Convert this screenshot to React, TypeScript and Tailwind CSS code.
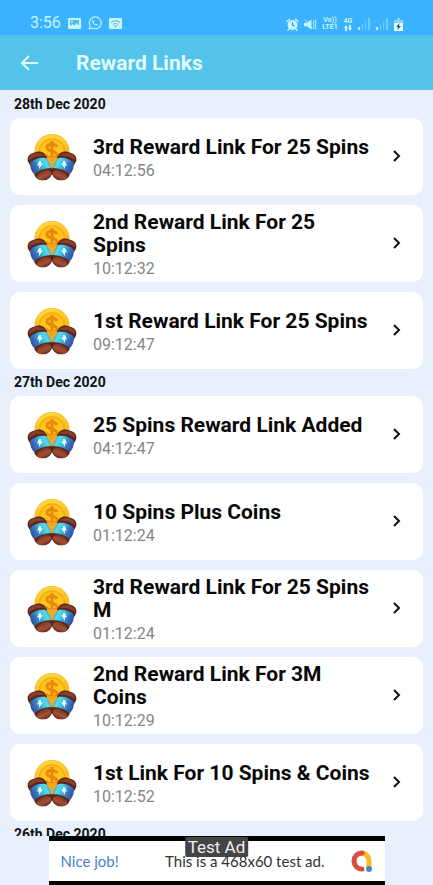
import { JSX, useId } from "react";

interface RewardLink {
  title: string;
  time: string;
}

interface RewardGroup {
  date: string;
  links: RewardLink[];
}

const groups: RewardGroup[] = [
  {
    date: "28th Dec 2020",
    links: [
      { title: "3rd Reward Link For 25 Spins", time: "04:12:56" },
      { title: "2nd Reward Link For 25 Spins", time: "10:12:32" },
      { title: "1st Reward Link For 25 Spins", time: "09:12:47" },
    ],
  },
  {
    date: "27th Dec 2020",
    links: [
      { title: "25 Spins Reward Link Added", time: "04:12:47" },
      { title: "10 Spins Plus Coins", time: "01:12:24" },
      { title: "3rd Reward Link For 25 Spins M", time: "01:12:24" },
      { title: "2nd Reward Link For 3M Coins", time: "10:12:29" },
      { title: "1st Link For 10 Spins & Coins", time: "10:12:52" },
    ],
  },
  { date: "26th Dec 2020", links: [] },
];

const SignalIcon = () => (
  <svg width="13" height="12" viewBox="0 0 13 12" fill="#c5f5ff">
    <rect x="0" y="9" width="2" height="3" />
    <g opacity="0.4">
      <rect x="4" y="6" width="1" height="6" />
      <rect x="7" y="3" width="1" height="9" />
      <rect x="10" y="0" width="2" height="12" />
    </g>
  </svg>
);

const StatusBar = () => (
  <div className="flex h-[35px] shrink-0 items-end justify-between bg-[#3ab2ff] pr-[30px] pb-1 pl-[30px] text-[#c5f5ff]">
    <div className="flex items-center gap-[7px]">
      <span className="text-[16px] leading-[16px]">3:56</span>
      <svg width="13" height="13" viewBox="0 0 13 13" fill="none">
        <rect x="0" y="1" width="13" height="11" rx="1" fill="#c5f5ff" />
        <rect x="2" y="3" width="9" height="7" fill="#4db9f5" />
        <path d="M2 10v-1l2.500-2 2 1.500L9 6l2 2.500V10Z" fill="#c5f5ff" />
        <circle cx="4" cy="4.700" r="1" fill="#c5f5ff" />
      </svg>
      <svg width="14" height="14" viewBox="0 0 24 24" fill="none">
        <path
          d="M2 22l1.700-5.400A10.200 10.200 0 1 1 7.600 20.500Z"
          stroke="#c5f5ff"
          strokeWidth="2"
          strokeLinejoin="round"
        />
        <path
          d="M8.700 6.800c-.9.300-1.700 1.300-1.500 2.700.4 3.300 3.800 6.800 7.200 7.300 1.500.2 2.700-.8 2.900-1.900l-2.600-1.500-1.300 1.200c-1.500-.5-3-2-3.500-3.500l1.200-1.200Z"
          fill="#c5f5ff"
        />
      </svg>
      <svg width="13" height="13" viewBox="0 0 13 13" fill="none">
        <rect y="1" width="13" height="11" rx="1" fill="#c5f5ff" />
        <g stroke="#5aa9cf" strokeWidth="1">
          <path d="M2 5.500c3-2.400 6-2.400 9 0" />
          <path d="M4 7.500c2-1.500 3-1.500 5 0" />
        </g>
        <circle cx="6.500" cy="9.300" r="1" fill="#5aa9cf" />
      </svg>
    </div>

    <div className="flex items-center gap-[5px]">
      <svg width="13" height="13" viewBox="0 0 13 13" fill="none">
        <circle cx="6.500" cy="7" r="5" fill="#c5f5ff" />
        <g stroke="#c5f5ff" strokeWidth="1.500" strokeLinecap="round">
          <path d="M1 3.500 3.500 1.200M12 3.500 9.500 1.200M3 11l-1 1.200M10 11l1 1.200" />
        </g>
        <path d="M6.500 4v3.200l2.300.8" stroke="#3a9fdc" strokeWidth="1.200" />
      </svg>
      <svg width="13" height="13" viewBox="0 0 14 13" fill="none">
        <path d="M0 4.500h3L8 1v11L3 8.500H0Z" fill="#c5f5ff" />
        <path d="M1 1l8 10" stroke="#c5f5ff" strokeWidth="1" />
        <path
          d="M10 2l1 1.500L10 5l1 1.500L10 8l1 1.500L10 11M12 1l1 1.500L12 4l1 1.500L12 7l1 1.500-1 1.500 1 1.500"
          stroke="#c5f5ff"
          strokeWidth="1"
        />
      </svg>
      <div className="w-4 text-center text-[7px] leading-[7px] font-bold">
        <div>Vo))</div>
        <div>LTE1</div>
      </div>
      <div className="flex w-[10px] flex-col items-center text-[7px] leading-[7px] font-bold">
        <span>4G</span>
        <svg width="8" height="6" viewBox="0 0 8 6" fill="#c5f5ff">
          <path d="M0 3h1v3h2V3h1L2 0ZM4 3h1V0h2v3h1L6 6Z" />
        </svg>
      </div>
      <SignalIcon />
      <SignalIcon />
      <svg width="9" height="13" viewBox="0 0 9 13">
        <path d="M3 0h3v2H3Z" fill="#8ad5fb" />
        <path d="M0 2h9v3H0Z" fill="#8ad5fb" />
        <path d="M0 5h9v8H0Z" fill="#e2fcff" />
        <path d="M5.500 5 2 9h2l-.5 3L7 8H5Z" fill="#2d5667" />
      </svg>
    </div>
  </div>
);

const Header = () => (
  <header className="flex h-[55px] shrink-0 items-center bg-[#54c3eb] pl-5 text-[#dffcff]">
    <button type="button" aria-label="Back" className="flex w-14">
      <svg width="20" height="18" viewBox="0 0 20 18" fill="none">
        <path d="M18 9H3M9 2 2 9l7 7" stroke="#dffcff" strokeWidth="2" />
      </svg>
    </button>
    <h1 className="text-[21px] leading-6 font-bold">Reward Links</h1>
  </header>
);

const Fist = ({ id }: { id: string }) => (
  <g>
    {/* upper cap */}
    <path
      d="M3 32C-1 27 0 22 6 20c6-3 12-2 14 5l-1 2Z"
      fill="#5b261b"
    />
    <path d="M2 25c2-5 12-7 16-2-5-1-11 0-16 4Z" fill="#8a412c" />
    {/* lower half */}
    <path
      d="M7 41c3-5 13-9 17-7 3 4 1 11-5 13-5 1-10 0-12-6Z"
      fill="#5b261b"
    />
    <ellipse
      cx="17"
      cy="42"
      rx="7.5"
      ry="4.5"
      transform="rotate(-24 17 42)"
      fill={`url(#${id}-brown)`}
    />
    {/* wristband */}
    <path
      d="M3 30c4-4 10-6 16-5 3 3 5 6 5 10-6 0-12 2-17 6-3-3-4-7-4-11Z"
      fill={`url(#${id}-band)`}
    />
    <path d="m12 28-2 5 2-1 0 4 4-6-2 .5V28Z" fill="#e8fdff" />
  </g>
);

const RewardIcon = () => {
  const id = useId().replace(/[^a-zA-Z0-9]/g, "");

  return (
    <svg
      width="50"
      height="48"
      viewBox="0 0 50 48"
      className="shrink-0"
      aria-hidden="true"
    >
      <defs>
        <linearGradient id={`${id}-coin`} x1="0" y1="0" x2="0.3" y2="1">
          <stop offset="0" stopColor="#ffdc45" />
          <stop offset="1" stopColor="#f9ac0c" />
        </linearGradient>
        <linearGradient id={`${id}-band`} x1="0" y1="0.7" x2="1" y2="0.3">
          <stop offset="0" stopColor="#3a4796" />
          <stop offset="0.3" stopColor="#3575c0" />
          <stop offset="0.6" stopColor="#3fc3e6" />
          <stop offset="0.8" stopColor="#5adbe2" />
          <stop offset="1" stopColor="#3a9bc9" />
        </linearGradient>
        <linearGradient id={`${id}-brown`} x1="0" y1="0" x2="0" y2="1">
          <stop offset="0" stopColor="#7a3524" />
          <stop offset="0.6" stopColor="#a05034" />
          <stop offset="1" stopColor="#7a3524" />
        </linearGradient>
      </defs>
      <circle cx="25" cy="18.500" r="17.500" fill="#f7b719" />
      <circle cx="25" cy="18" r="16.500" fill={`url(#${id}-coin)`} />
      <circle
        cx="25"
        cy="18.500"
        r="12.500"
        fill="#ffc51c"
        stroke="#f4aa12"
        strokeWidth="1.500"
      />
      <path
        d="M30 14c-1-3-9-4-10 0-1 5 10 3 10 8 0 4-9 4-11 0M25 8v20"
        fill="none"
        stroke="#e8890f"
        strokeWidth="3"
      />
      <path d="M18 24h14l-7 11Z" fill="#f8a81c" opacity="0.8" />
      <Fist id={id} />
      <g transform="translate(50 0) scale(-1 1)">
        <Fist id={id} />
      </g>
    </svg>
  );
};

const RewardCard = ({ title, time }: RewardLink) => (
  <li>
    <button
      type="button"
      className="flex h-[77px] w-full items-center rounded-[10px] bg-white pr-5 pl-[17px] text-left"
    >
      <RewardIcon />
      <span className="ml-4 flex flex-1 flex-col pt-1">
        <span className="text-[21px] leading-[23px] font-bold text-[#080808]">
          {title}
        </span>
        <span className="text-[16px] leading-[23px] text-[#858585]">
          {time}
        </span>
      </span>
      <svg
        width="12"
        height="14"
        viewBox="0 0 12 14"
        fill="none"
        className="ml-5 shrink-0"
      >
        <path d="m3 1 5 5-5 5" stroke="#111" strokeWidth="2" />
      </svg>
    </button>
  </li>
);

const AdBanner = () => (
  <aside className="relative mx-auto h-[49px] w-[336px] shrink-0 border-t-[5px] border-b-4 border-black bg-white">
    <div className="flex h-10 items-center px-3 font-['Lato',sans-serif] text-[15px]">
      <a href="#" className="text-[#4682c8]">
        Nice job!
      </a>
      <span className="ml-auto text-[#333]">This is a 468x60 test ad.</span>
      <svg
        width="24"
        height="24"
        viewBox="0 0 24 24"
        fill="none"
        className="ml-6"
      >
        <path
          d="M12 4c5 0 8 4 8 8v7"
          stroke="#f5bd25"
          strokeWidth="5"
        />
        <path
          d="M13 4a8 8 0 1 0 0 16"
          stroke="#d94d40"
          strokeWidth="5"
          strokeLinecap="round"
        />
        <circle cx="20" cy="20" r="3" fill="#4c87ca" />
      </svg>
    </div>
    <span className="absolute -top-1 left-1/2 -translate-x-1/2 rounded-xs bg-[#444] px-[3px] text-[17px] leading-5 whitespace-nowrap text-[#eee]">
      Test Ad
    </span>
  </aside>
);

const App = (): JSX.Element => (
  <div className="flex h-screen flex-col overflow-hidden bg-[#e7f0fc] font-['Roboto',sans-serif]">
    <StatusBar />
    <Header />
    <main className="min-h-0 flex-1 overflow-hidden px-[10px] pt-px">
      {groups.map((group) => (
        <section key={group.date}>
          <h2 className="pl-1 text-[14px] leading-[27px] font-bold text-[#111]">
            {group.date}
          </h2>
          <ul className="flex flex-col gap-[10px]">
            {group.links.map((link) => (
              <RewardCard key={link.title} {...link} />
            ))}
          </ul>
        </section>
      ))}
    </main>
    <AdBanner />
  </div>
);

export default App;
